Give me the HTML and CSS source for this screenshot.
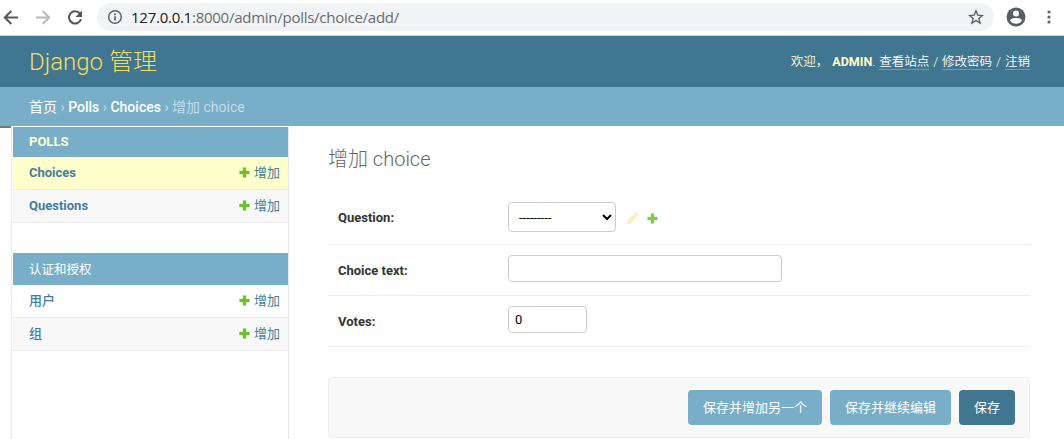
FILE: index.html
```html
<!DOCTYPE html>
<html lang="zh-CN">
<head>
<meta charset="utf-8">
<title>增加 choice</title>
<link rel="stylesheet" href="styles.css">
</head>
<body>
<svg class="defs" width="0" height="0">
  <symbol id="plus" viewBox="0 0 11 11"><path d="M3.7.2h3.6v3.5h3.5v3.6H7.300v3.500H3.700V7.300H.2V3.700h3.500z" fill="currentColor" opacity=".5"/><path d="M4 .7h3V4h3.300v3H7v3.300H4V7H.7V4H4z" fill="currentColor"/></symbol>
</svg>
<div class="toolbar">
  <svg class="nav" width="96" height="35" viewBox="0 0 96 35" fill="none" stroke-width="2">
    <path d="M18 17.500H5M11.300 11 4.800 17.500l6.500 6.500" stroke="#55585c"/>
    <path d="M36 17.500h13M42.700 11 49.200 17.500l-6.500 6.500" stroke="#b7b9bb"/>
    <path d="M80 13.700A6.100 6.100 0 1 0 81 19" stroke="#55585c"/>
    <path d="M82 10.500v6.500h-6.500z" fill="#55585c"/>
  </svg>
  <div class="address">
    <svg width="16" height="16" viewBox="0 0 16 16"><circle cx="8" cy="8" r="6.300" fill="none" stroke="#5f6368" stroke-width="1.500"/><path d="M7.200 7.200h1.700v4.300H7.200zM7.200 4.500h1.700v1.700H7.200z" fill="#5f6368"/></svg>
    <span class="url"><span class="host">127.0.0.1</span>:8000/admin/polls/choice/add/</span>
    <svg class="star" width="16" height="16" viewBox="0 0 16 16"><path d="M8 1.900l1.800 4.200 4.600.4-3.500 3 1.100 4.500L8 11.600 4 14l1.100-4.500-3.500-3 4.600-.4z" fill="none" stroke="#5f6368" stroke-width="1.400"/></svg>
  </div>
  <svg class="user" width="20" height="20" viewBox="0 0 20 20"><circle cx="10" cy="10" r="9.500" fill="#5a5d62"/><circle cx="10" cy="6.500" r="3" fill="#fff"/><path d="M4.200 13.400C4.200 11.500 8 10.900 10 10.900s5.800.6 5.800 2.500C14.700 15.500 12.500 16.700 10 16.700S5.300 15.500 4.200 13.400z" fill="#fff"/></svg>
  <svg class="dots" width="4" height="16" viewBox="0 0 4 16" fill="#5f6368"><circle cx="2" cy="3" r="1.600"/><circle cx="2" cy="8" r="1.600"/><circle cx="2" cy="13" r="1.600"/></svg>
</div>
<header class="header">
  <div class="brand">Django 管理</div>
  <div class="tools">欢迎， <strong>ADMIN</strong>. <a>查看站点</a> / <a>修改密码</a> / <a>注销</a></div>
</header>
<nav class="breadcrumbs"><a>首页</a> › <a class="en">Polls</a> › <a class="en">Choices</a> › 增加 choice</nav>
<div class="page">
  <div class="edge"></div>
  <aside class="sidebar">
    <section class="module">
      <h2 class="caption short">POLLS</h2>
      <div class="model current"><b>Choices</b><span class="add"><svg width="11" height="11"><use href="#plus"/></svg>增加</span></div>
      <div class="model alt"><b>Questions</b><span class="add"><svg width="11" height="11"><use href="#plus"/></svg>增加</span></div>
    </section>
    <section class="module">
      <h2 class="caption cn">认证和授权</h2>
      <div class="model"><b class="cn">用户</b><span class="add"><svg width="11" height="11"><use href="#plus"/></svg>增加</span></div>
      <div class="model alt"><b class="cn">组</b><span class="add"><svg width="11" height="11"><use href="#plus"/></svg>增加</span></div>
    </section>
  </aside>
  <main class="content">
    <h1 class="title">增加 choice</h1>
    <div class="row first">
      <label class="label">Question:</label>
      <select class="field select"><option>---------</option></select>
      <svg class="pencil" width="13" height="13" viewBox="0 0 13 13"><path d="M1 12l.8-3.600L8 2.200l2.800 2.800-6.200 6.200z" fill="#fce8b0"/><path d="M8.700 1.500l.8-.7q.6-.4 1.200.1l1.400 1.400q.5.6 0 1.200l-.7.800z" fill="#fbe3a4"/><path d="M3.500 9.500l5-5" stroke="#fff5d8" stroke-width=".8"/></svg>
      <svg class="plus" width="11" height="11"><use href="#plus"/></svg>
    </div>
    <div class="row">
      <label class="label">Choice text:</label>
      <input class="field text" type="text">
    </div>
    <div class="row">
      <label class="label">Votes:</label>
      <input class="field votes" type="text" value="0">
    </div>
    <div class="submit">
      <button class="button another">保存并增加另一个</button>
      <button class="button continue">保存并继续编辑</button>
      <button class="button save">保存</button>
    </div>
  </main>
</div>
</body>
</html>
```
FILE: styles.css
```css
* { box-sizing: border-box; }
body { margin: 0; height: 439px; overflow: hidden; background: #fff; color: #333; font: 13px Roboto, "Noto Sans CJK SC", sans-serif; }
svg { flex: none; }
.defs { position: absolute; }
.toolbar { display: flex; align-items: center; height: 36px; padding-bottom: 1px; border-bottom: 1px solid #d5d8da; }
.nav { margin-right: 1px; }
.address { display: flex; align-items: center; width: 897px; height: 28px; padding: 0 10px; border-radius: 14px; background: #f1f3f4; }
.url { margin-left: 8px; color: #6a6d71; font: 15px/26px "Open Sans", sans-serif; letter-spacing: -.26px; white-space: nowrap; }
.host { color: #202124; }
.star { margin-left: auto; }
.user { margin-left: 12px; }
.dots { margin-left: 21px; }
.header { display: flex; align-items: center; justify-content: space-between; height: 51px; padding: 0 34px 0 29px; background: #417690; color: #ffc; }
.brand { padding-top: 2px; color: #f5dd5d; font-size: 24px; font-weight: 300; line-height: 49px; }
.tools { padding-top: 1px; font-size: 12.500px; font-weight: 350; line-height: 14px; white-space: pre; word-spacing: .9px; }
.tools strong { font-weight: 700; }
.tools a { display: inline-block; border-bottom: 1px solid #7899ac; color: #fff; }
.breadcrumbs { height: 39px; padding-left: 29px; background: #79aec8; color: #c4dce8; font-size: 14px; line-height: 40px; }
.breadcrumbs a { color: #fff; }
.breadcrumbs .en { font-weight: 500; }
.page { display: flex; height: 313px; }
.edge { width: 11px; height: 2px; background: #777; }
.sidebar { width: 278px; padding: 1px 0 0 1px; border: solid #eaeaea; border-width: 0 1px; }
.module { margin-bottom: 30px; }
.caption { height: 32px; margin: 0; padding-left: 16px; background: #79aec8; color: #ffc; font-size: 13px; font-weight: 700; line-height: 32px; }
.caption.short { height: 30px; line-height: 30px; }
.caption.cn { padding-top: 1px; color: #fff; font-size: 12.500px; font-weight: 400; }
.model { display: flex; justify-content: space-between; height: 33px; padding: 0 8px 0 16px; border-bottom: 1px solid #eaeaea; color: #447e9b; line-height: 31px; }
.model.alt { background: #f8f8f8; }
.model.current { background: #ffc; }
.model .cn { font-weight: 500; }
.add { display: flex; align-items: center; gap: 4px; height: 31px; font-weight: 400; }
.add svg, .plus { color: #70bf2b; }
.content { width: 702px; margin-left: 39px; }
.title { height: 66px; margin: 0; padding-top: 19px; color: #666; font-size: 20px; font-weight: 300; line-height: 28px; }
.row { display: flex; align-items: flex-start; height: 51px; padding: 10px; border-bottom: 1px solid #eee; }
.row.first { height: 53px; }
.label { width: 170px; padding-top: 8px; font-weight: 700; line-height: 15px; }
.field { height: 27px; margin: 0; padding: 5px 6px; border: 1px solid #ccc; border-radius: 4px; background: #fff; color: #000; font: 13px Roboto, sans-serif; }
.select { width: 108px; height: 30px; padding-right: 4px; }
.text { width: 274px; }
.votes { width: 79px; }
.pencil { margin: 10px 0 0 10px; }
.plus { margin: 11px 0 0 8px; opacity: .85; }
.submit { display: flex; justify-content: flex-end; gap: 8px; height: 61px; margin-top: 30px; padding: 12px 14px; border: 1px solid #eee; border-radius: 4px; background: #f8f8f8; }
.button { height: 35px; padding: 0 0 2px; border: 0; border-radius: 4px; background: #79aec8; color: #fff; font: 13px Roboto, "Noto Sans CJK SC", sans-serif; }
.another { width: 134px; }
.continue { width: 121px; }
.save { width: 56px; background: #417690; }
```
